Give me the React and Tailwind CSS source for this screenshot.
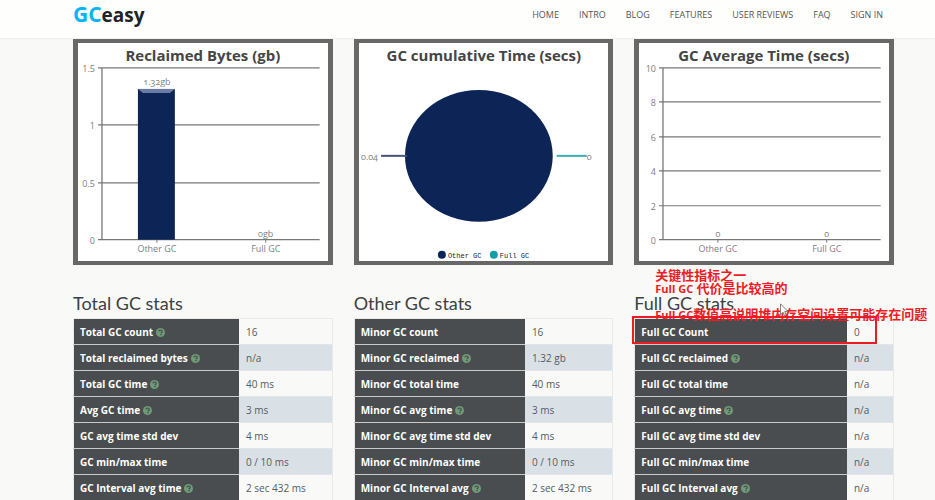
import React from "react";

const navItems = ["HOME", "INTRO", "BLOG", "FEATURES", "USER REVIEWS", "FAQ", "SIGN IN"];

const totalStats = [
  ["Total GC count", "16", true],
  ["Total reclaimed bytes", "n/a", true],
  ["Total GC time", "40 ms", true],
  ["Avg GC time", "3 ms", true],
  ["GC avg time std dev", "4 ms", false],
  ["GC min/max time", "0 / 10 ms", false],
  ["GC Interval avg time", "2 sec 432 ms", true],
];

const otherStats = [
  ["Minor GC count", "16", false],
  ["Minor GC reclaimed", "1.32 gb", true],
  ["Minor GC total time", "40 ms", false],
  ["Minor GC avg time", "3 ms", true],
  ["Minor GC avg time std dev", "4 ms", false],
  ["Minor GC min/max time", "0 / 10 ms", false],
  ["Minor GC Interval avg", "2 sec 432 ms", true],
];

const fullStats = [
  ["Full GC Count", "0", false],
  ["Full GC reclaimed", "n/a", true],
  ["Full GC total time", "n/a", false],
  ["Full GC avg time", "n/a", true],
  ["Full GC avg time std dev", "n/a", false],
  ["Full GC min/max time", "n/a", false],
  ["Full GC Interval avg", "n/a", true],
];

function HelpIcon() {
  return (
    <svg viewBox="0 0 18 18" className="ml-[3px] inline-block size-[9px] align-[-1px]" aria-hidden="true">
      <circle cx="9" cy="9" r="9" fill="#6f9a76" />
      <path d="M5.8 6.8C6 4.8 7.3 4 9 4c2 0 3.4 1.1 3.4 2.8 0 2.2-2.3 2.2-2.3 3.9" fill="none" stroke="#43494a" strokeWidth="2.3" />
      <rect x="8.7" y="12" width="2.6" height="2.4" fill="#43494a" />
    </svg>
  );
}

function StatsTable({ rows, labelWidth, title }) {
  return (
    <>
      <h2 className="mt-[26px] mb-[3px] font-['Lato',sans-serif] text-[18px] leading-6 text-[#3c4144]">{title}</h2>
      <table className="w-full table-fixed border-collapse border border-[#e8eaea] text-left text-[10px] leading-[15px]" aria-label={title}>
        <colgroup>
          <col className={labelWidth} />
          <col />
        </colgroup>
        <tbody>
          {rows.map(([label, value, help]) => (
            <tr key={label} className="h-[26px] even:bg-[#dae1e6]">
              <th scope="row" className="border-b border-[#c9cbcb] bg-[#494d4f] px-[6px] pt-[2px] font-bold whitespace-nowrap text-white">
                {label}
                {help && <HelpIcon />}
              </th>
              <td className="border-b border-[#e3e6e8] px-[7px] pt-[2px] whitespace-nowrap text-[#555b5e]">{value}</td>
            </tr>
          ))}
        </tbody>
      </table>
    </>
  );
}

function ChartFrame({ title, children }) {
  return (
    <div className="border-x-5 border-y-4 border-[#686967] bg-white">
      <svg viewBox="0 0 250 218" className="block h-auto w-full font-['Open_Sans',sans-serif]" role="img" aria-label={title}>
        <text x="125" y="18" textAnchor="middle" className="fill-[#454545] text-[15px] font-bold">{title}</text>
        {children}
      </svg>
    </div>
  );
}

function BarChart({ title, ticks, categories, barLabels, bar }) {
  const step = 172 / (ticks.length - 1);
  return (
    <ChartFrame title={title}>
      {ticks.map((tick, i) => {
        const y = Math.round(25 + step * i);
        return (
          <g key={tick}>
            <line x1="20" x2="242" y1={y} y2={y} stroke="#777" strokeWidth="1.2" />
            <text x="17" y={y + 4} textAnchor="end" className="fill-[#808080] text-[9px] font-medium">{tick}</text>
          </g>
        );
      })}
      <line x1="24" x2="24" y1="25" y2="197" stroke="#777" strokeWidth="1.3" />
      {bar && (
        <g>
          <rect x="60" y={bar} width="37" height={197 - bar} fill="#0c2556" />
          <polygon points={`60,${bar} 97,${bar} 92,${bar + 4} 65,${bar + 4}`} fill="#6b7ba3" />
        </g>
      )}
      {categories.map((name, i) => {
        const x = 79 + i * 109;
        return (
          <g key={name}>
            <line x1={x} x2={x} y1="197" y2="200" stroke="#777" />
            <text x={x} y="209" textAnchor="middle" className="fill-[#808080] text-[9px] font-medium">{name}</text>
            <text x={x} y={i === 0 && bar ? bar - 4 : 194} textAnchor="middle" className="fill-[#808080] text-[9px] font-medium oldstyle-nums">{barLabels[i]}</text>
          </g>
        );
      })}
    </ChartFrame>
  );
}

function PieChart() {
  return (
    <ChartFrame title="GC cumulative Time (secs)">
      <ellipse cx="120" cy="113" rx="74" ry="66" fill="#0c2556" />
      <line x1="22" x2="48" y1="113" y2="113" stroke="#49527c" strokeWidth="2" />
      <line x1="198" x2="228" y1="113" y2="113" stroke="#35b0b4" strokeWidth="2" />
      <text x="2" y="117" className="fill-[#808080] text-[9px] font-medium oldstyle-nums">0.04</text>
      <text x="228" y="117" className="fill-[#808080] text-[9px] font-medium oldstyle-nums">0</text>
      <circle cx="83" cy="212" r="4" fill="#0c2556" />
      <text x="89" y="215" className="fill-[#222] font-['Liberation_Mono',monospace] text-[7px]">Other GC</text>
      <circle cx="135" cy="212" r="4" fill="#12a0a5" />
      <text x="141" y="215" className="fill-[#222] font-['Liberation_Mono',monospace] text-[7px]">Full GC</text>
    </ChartFrame>
  );
}

function Annotations() {
  return (
    <div className="pointer-events-none absolute inset-0">
      <p className="absolute top-[230px] left-[21px] font-['Open_Sans','Noto_Sans_CJK_SC',sans-serif] text-[13px] leading-[13px] font-bold whitespace-pre text-[#ed1c24]">
        <span className="block">关键性指标之一</span>
        <span className="block"><span className="text-[11px]">Full GC</span> 代价是比较高的</span>
        <span className="mt-[13px] block"><span className="text-[11px]">Full GC</span>数值高说明堆内存空间设置可能存在问题</span>
      </p>
      <div className="absolute top-[277px] right-[17px] -left-[2px] h-[28px] border-2 border-[#ed1c24]" />
      <svg viewBox="0 0 9 14" className="absolute top-[264px] left-[146px] h-[14px] w-[9px]" aria-hidden="true">
        <path d="M.5.8v11l2.6-2.6 1.5 3.6 1.6-.7-1.5-3.5h3.4z" fill="#fafafa" stroke="#777" strokeWidth=".9" />
      </svg>
    </div>
  );
}

export default function App() {
  return (
    <div className="h-screen overflow-hidden bg-[#f9f9f8] font-['Open_Sans',sans-serif]">
      <header className="flex h-[38px] items-start justify-between bg-[#fefefd] pr-[52px] pl-[73px] shadow-xs">
        <a href="#" className="text-[19px] leading-[28px] font-bold text-[#222]">
          <span className="text-[21px] text-[#08b4f5]">GC</span>easy
        </a>
        <nav className="flex gap-[20px] text-[9px] leading-[30px] text-[#555]">
          {navItems.map((item) => (
            <a key={item} href="#">{item}</a>
          ))}
        </nav>
      </header>
      <main className="grid grid-cols-3 gap-x-[21px] pt-px pr-[41px] pl-[73px]">
        <section>
          <BarChart title="Reclaimed Bytes (gb)" ticks={["1.5", "1", "0.5", "0"]} categories={["Other GC", "Full GC"]} barLabels={["1.32gb", "0gb"]} bar={46} />
          <StatsTable title="Total GC stats" rows={totalStats} labelWidth="w-[64%]" />
        </section>
        <section>
          <PieChart />
          <StatsTable title="Other GC stats" rows={otherStats} labelWidth="w-[66%]" />
        </section>
        <section className="relative">
          <BarChart title="GC Average Time (secs)" ticks={["10", "8", "6", "4", "2", "0"]} categories={["Other GC", "Full GC"]} barLabels={["0", "0"]} />
          <StatsTable title="Full GC stats" rows={fullStats} labelWidth="w-[82%]" />
          <Annotations />
        </section>
      </main>
    </div>
  );
}
